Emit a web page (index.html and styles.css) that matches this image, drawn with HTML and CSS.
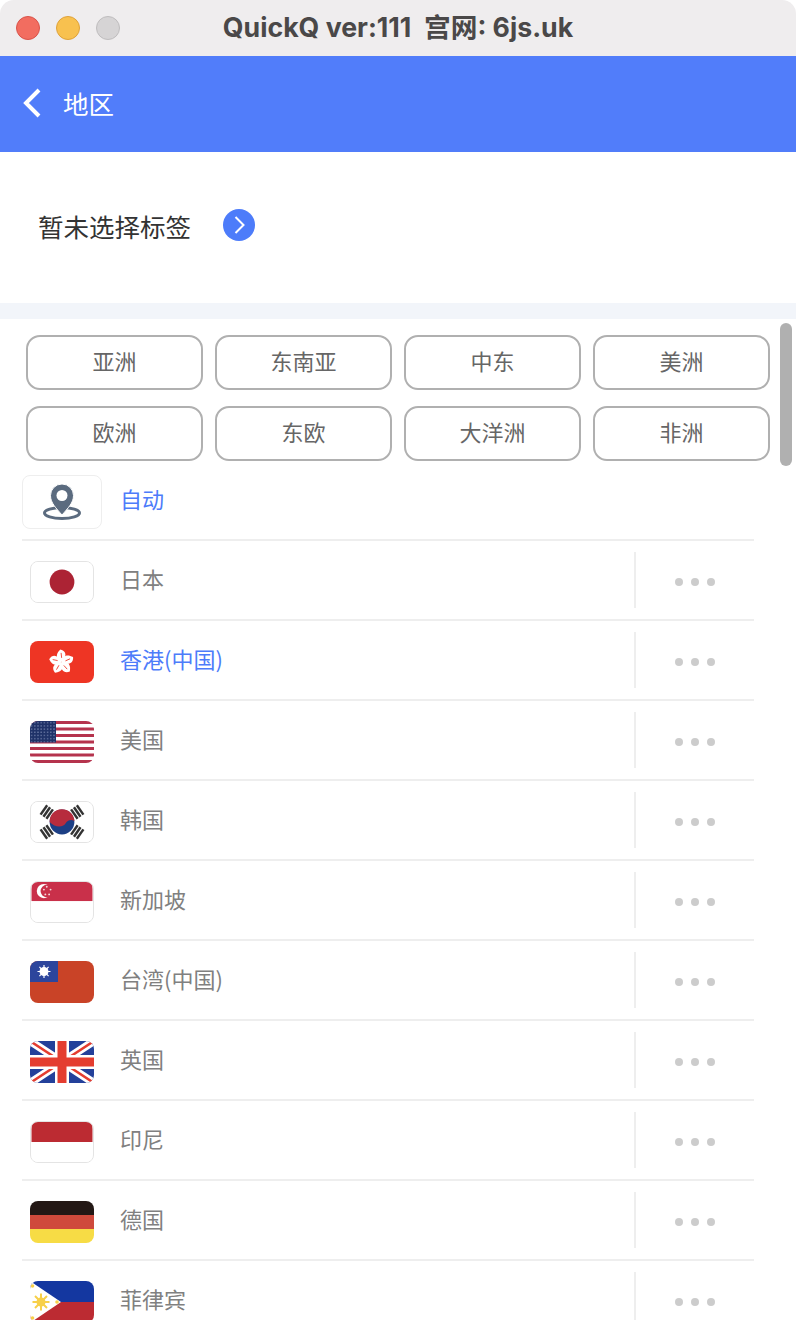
FILE: index.html
```html
<!DOCTYPE html>
<html>
<head>
    <meta charset="utf-8">
    <title>QuickQ</title>
    <link rel="stylesheet" href="styles.css">
</head>
<body>
<div class="window">
    <div class="titlebar">
        <div class="lights">
            <span class="light red"></span>
            <span class="light yellow"></span>
            <span class="light grey"></span>
        </div>
        <div class="title">QuickQ ver:111&nbsp; 宫网: 6js.uk</div>
    </div>

    <div class="header">
        <svg class="back" width="22" height="32" viewBox="0 0 22 32"><path d="M18 3 L5 16 L18 29" fill="none" stroke="#fff" stroke-width="4"/></svg>
        <span class="header-text">地区</span>
    </div>

    <div class="tag-bar">
        <span class="tag-text">暂未选择标签</span>
        <span class="tag-go">
            <svg width="32" height="32" viewBox="0 0 32 32"><path d="M12.500 8 L20.500 16 L12.500 24" fill="none" stroke="#fff" stroke-width="2"/></svg>
        </span>
    </div>

    <div class="strip"></div>

    <div class="content">
        <div class="scrollbar"></div>

        <div class="tabs">
            <div class="tab">亚洲</div>
            <div class="tab">东南亚</div>
            <div class="tab">中东</div>
            <div class="tab">美洲</div>
            <div class="tab">欧洲</div>
            <div class="tab">东欧</div>
            <div class="tab">大洋洲</div>
            <div class="tab">非洲</div>
        </div>

        <div class="list">
            <div class="row">
                <div class="auto-icon">
                    <svg width="40" height="38" viewBox="0 0 40 38">
                        <ellipse cx="20" cy="30" rx="17.500" ry="5.500" fill="none" stroke="#5b6b7f" stroke-width="3"/>
                        <path d="M20 32 C14 25 8.500 20 8.500 12.500 A11.500 11.500 0 0 1 31.500 12.500 C31.500 20 26 25 20 32 Z" fill="#5b6b7f" stroke="#fff" stroke-width="1"/>
                        <circle cx="20" cy="12.500" r="5.500" fill="#fff"/>
                    </svg>
                </div>
                <span class="name active">自动</span>
            </div>

            <div class="row">
                <svg class="flag bordered" viewBox="0 0 64 42"><rect width="64" height="42" fill="#fff"/><circle cx="32" cy="21" r="13" fill="#ac2334"/></svg>
                <span class="name">日本</span>
                <div class="more"><i></i><i></i><i></i></div>
            </div>

            <div class="row">
                <svg class="flag" viewBox="0 0 64 42">
                    <defs>
                        <g id="petal">
                            <path d="M31.500 21 C26.500 17 27 12 33 8.500 C38.500 11 38.500 17 31.500 21 Z" fill="#fff"/>
                            <path d="M33 12 L32.500 17" stroke="#ee3524" stroke-width="0.800"/>
                        </g>
                    </defs>
                    <rect width="64" height="42" fill="#ee3524"/>
                    <use href="#petal" transform="rotate(-12 31.500 21)"/>
                    <use href="#petal" transform="rotate(60 31.500 21)"/>
                    <use href="#petal" transform="rotate(132 31.500 21)"/>
                    <use href="#petal" transform="rotate(204 31.500 21)"/>
                    <use href="#petal" transform="rotate(276 31.500 21)"/>
                </svg>
                <span class="name active">香港(中国)</span>
                <div class="more"><i></i><i></i><i></i></div>
            </div>

            <div class="row">
                <svg class="flag" viewBox="0 0 64 42">
                    <defs>
                        <pattern id="stars" width="3.200" height="3.200" patternUnits="userSpaceOnUse">
                            <circle cx="1.600" cy="1.600" r="0.700" fill="#7f8db5"/>
                        </pattern>
                    </defs>
                    <rect width="64" height="42" fill="#fff"/>
                    <g fill="#b5334d">
                        <rect y="0" width="64" height="3"/>
                        <rect y="6.500" width="64" height="3"/>
                        <rect y="13" width="64" height="3"/>
                        <rect y="19.500" width="64" height="3"/>
                        <rect y="26" width="64" height="3"/>
                        <rect y="32.500" width="64" height="3"/>
                        <rect y="39" width="64" height="3"/>
                    </g>
                    <rect width="26" height="21.500" fill="#1f3268"/>
                    <rect width="26" height="21.500" fill="url(#stars)"/>
                </svg>
                <span class="name">美国</span>
                <div class="more"><i></i><i></i><i></i></div>
            </div>

            <div class="row">
                <svg class="flag bordered" viewBox="0 0 64 42">
                    <defs>
                        <g id="trigram" fill="#333">
                            <rect x="-6" y="-5" width="12" height="2.600"/>
                            <rect x="-6" y="-1.300" width="12" height="2.600"/>
                            <rect x="-6" y="2.400" width="12" height="2.600"/>
                        </g>
                    </defs>
                    <rect width="64" height="42" fill="#fff"/>
                    <circle cx="32" cy="21" r="13" fill="#1c3f85"/>
                    <path d="M19 21 A13 13 0 0 1 45 20 C42 18 38 19 36 22 C34 26 26 28 19 21 Z" fill="#b72c3d"/>
                    <use href="#trigram" transform="translate(16 10.500) rotate(-55)"/>
                    <use href="#trigram" transform="translate(48 10.500) rotate(55)"/>
                    <use href="#trigram" transform="translate(16 31.500) rotate(55)"/>
                    <use href="#trigram" transform="translate(48 31.500) rotate(-55)"/>
                </svg>
                <span class="name">韩国</span>
                <div class="more"><i></i><i></i><i></i></div>
            </div>

            <div class="row">
                <svg class="flag bordered" viewBox="0 0 64 42">
                    <rect width="64" height="42" fill="#fff"/>
                    <rect width="64" height="20" fill="#c9304a"/>
                    <circle cx="13" cy="9.500" r="7.500" fill="#fff"/>
                    <circle cx="16" cy="9.500" r="6.500" fill="#c9304a"/>
                    <g fill="#f4d6da">
                        <circle cx="16" cy="5" r="1"/><circle cx="20" cy="8" r="1"/><circle cx="13" cy="8" r="1"/><circle cx="14.500" cy="13" r="1"/><circle cx="18.500" cy="13" r="1"/>
                    </g>
                </svg>
                <span class="name">新加坡</span>
                <div class="more"><i></i><i></i><i></i></div>
            </div>

            <div class="row">
                <svg class="flag" viewBox="0 0 64 42">
                    <rect width="64" height="42" fill="#c94327"/>
                    <rect width="28" height="21" fill="#2c459c"/>
                    <circle cx="14" cy="10.500" r="4.500" fill="#fff"/>
                    <path d="M14 4 V17 M7.500 10.500 H20.500 M9.400 5.900 L18.600 15.100 M18.600 5.900 L9.400 15.100" stroke="#fff" stroke-width="1.200"/>
                </svg>
                <span class="name">台湾(中国)</span>
                <div class="more"><i></i><i></i><i></i></div>
            </div>

            <div class="row">
                <svg class="flag" viewBox="0 0 64 42">
                    <rect width="64" height="42" fill="#23409a"/>
                    <path d="M0 0 L64 42 M64 0 L0 42" stroke="#fff" stroke-width="8"/>
                    <path d="M0 0 L64 42 M64 0 L0 42" stroke="#e43d30" stroke-width="2.500"/>
                    <rect x="25" width="14" height="42" fill="#fff"/>
                    <rect y="14" width="64" height="14" fill="#fff"/>
                    <rect x="27.500" width="9" height="42" fill="#e43d30"/>
                    <rect y="16.500" width="64" height="9" fill="#e43d30"/>
                </svg>
                <span class="name">英国</span>
                <div class="more"><i></i><i></i><i></i></div>
            </div>

            <div class="row">
                <svg class="flag bordered" viewBox="0 0 64 42">
                    <rect width="64" height="42" fill="#fff"/>
                    <rect width="64" height="21" fill="#bc2b32"/>
                </svg>
                <span class="name">印尼</span>
                <div class="more"><i></i><i></i><i></i></div>
            </div>

            <div class="row">
                <svg class="flag" viewBox="0 0 64 42">
                    <rect width="64" height="14" fill="#231815"/>
                    <rect y="14" width="64" height="14" fill="#cf4a3c"/>
                    <rect y="28" width="64" height="14" fill="#f7dc45"/>
                </svg>
                <span class="name">德国</span>
                <div class="more"><i></i><i></i><i></i></div>
            </div>

            <div class="row">
                <svg class="flag" viewBox="0 0 64 42">
                    <rect width="64" height="21" fill="#1437a0"/>
                    <rect y="21" width="64" height="21" fill="#bc2b32"/>
                    <path d="M0 0 L31 21 L0 42 Z" fill="#fff"/>
                    <circle cx="11" cy="21" r="4.500" fill="#f7d04a"/>
                    <path d="M11 12.500 V29.500 M2.500 21 H19.500 M5 15 L17 27 M17 15 L5 27" stroke="#f7d04a" stroke-width="2"/>
                    <circle cx="2.500" cy="5" r="1.800" fill="#f7d04a"/>
                    <circle cx="2.500" cy="37" r="1.800" fill="#f7d04a"/>
                    <circle cx="27" cy="21" r="1.800" fill="#f7d04a"/>
                </svg>
                <span class="name">菲律宾</span>
                <div class="more"><i></i><i></i><i></i></div>
            </div>
        </div>
    </div>
</div>
</body>
</html>
```

FILE: styles.css
```css
html,
body {
    margin: 0;
    height: 100%;
    background: #fff;
    overflow: hidden;
    font-family: "Noto Sans CJK SC", "Noto Sans", sans-serif;
}

.window {
    height: 1320px;
    overflow: hidden;
    border-radius: 14px 14px 0 0;
}

/* title bar */
.titlebar {
    height: 56px;
    background: #efedee;
    display: flex;
    align-items: center;
    position: relative;
}

.lights {
    display: flex;
    gap: 16px;
    padding-left: 16px;
}

.light {
    width: 24px;
    height: 24px;
    border-radius: 50%;
    box-sizing: border-box;
}

.red { background: #f26d60; border: 1px solid #d9534a; }
.yellow { background: #f8c14f; border: 1px solid #dfa23a; }
.grey { background: #d6d4d5; border: 1px solid #bfbdbe; }

.title {
    position: absolute;
    left: 0;
    right: 0;
    margin-top: -6px;
    text-align: center;
    font-family: Inter, "Noto Sans CJK SC", sans-serif;
    font-weight: 700;
    font-size: 26.700px;
    color: #4a4848;
}

/* blue header */
.header {
    height: 96px;
    background: #517dfa;
    display: flex;
    align-items: center;
    padding-left: 21px;
}

.back {
    margin-right: 20px;
    margin-top: -3px;
}

.header-text {
    font-size: 25.500px;
    color: #fff;
    margin-bottom: 4px;
}

/* tag selection */
.tag-bar {
    height: 151px;
    display: flex;
    align-items: center;
    padding-left: 38px;
    gap: 32px;
}

.tag-text {
    font-size: 25.500px;
    color: #333;
    margin-bottom: 4px;
}

.tag-go {
    width: 32px;
    height: 32px;
    border-radius: 50%;
    background: #4d7cfa;
    margin-bottom: 5px;
}

.tag-go svg {
    display: block;
}

.strip {
    height: 16px;
    background: #f2f5fa;
}

/* region list */
.content {
    position: relative;
}

.scrollbar {
    position: absolute;
    top: 4px;
    left: 780px;
    width: 12px;
    height: 143px;
    border-radius: 6px;
    background: #b0b0b0;
}

.tabs {
    display: grid;
    grid-template-columns: repeat(4, 177px);
    grid-auto-rows: 55px;
    gap: 16px 12px;
    padding: 16px 0 0 26px;
}

.tab {
    display: flex;
    align-items: center;
    justify-content: center;
    box-sizing: border-box;
    padding-bottom: 6px;
    border: 2px solid #b0b0b0;
    border-radius: 14px;
    font-size: 22px;
    color: #666;
}

.list {
    margin-left: 22px;
    width: 732px;
}

.row {
    height: 78px;
    border-bottom: 2px solid #eee;
    display: flex;
    align-items: center;
}

.auto-icon {
    width: 80px;
    height: 54px;
    box-sizing: border-box;
    border: 1px solid #eee;
    border-radius: 8px;
    display: flex;
    align-items: center;
    justify-content: center;
    margin: 4px 18px 0 0;
}

.flag {
    width: 64px;
    height: 42px;
    margin: 4px 26px 0 8px;
    border-radius: 8px;
    box-sizing: border-box;
}

.bordered {
    border: 1.500px solid #e4e4e4;
}

.name {
    font-size: 22px;
    color: #808080;
    margin-bottom: 4px;
}

.active {
    color: #4d7cfa;
}

.more {
    margin-left: auto;
    width: 120px;
    height: 56px;
    border-left: 2px solid #eee;
    box-sizing: border-box;
    display: flex;
    align-items: center;
    justify-content: center;
    gap: 8px;
    padding-top: 4px;
}

.more i {
    width: 8px;
    height: 8px;
    border-radius: 50%;
    background: #ccc;
}
```
